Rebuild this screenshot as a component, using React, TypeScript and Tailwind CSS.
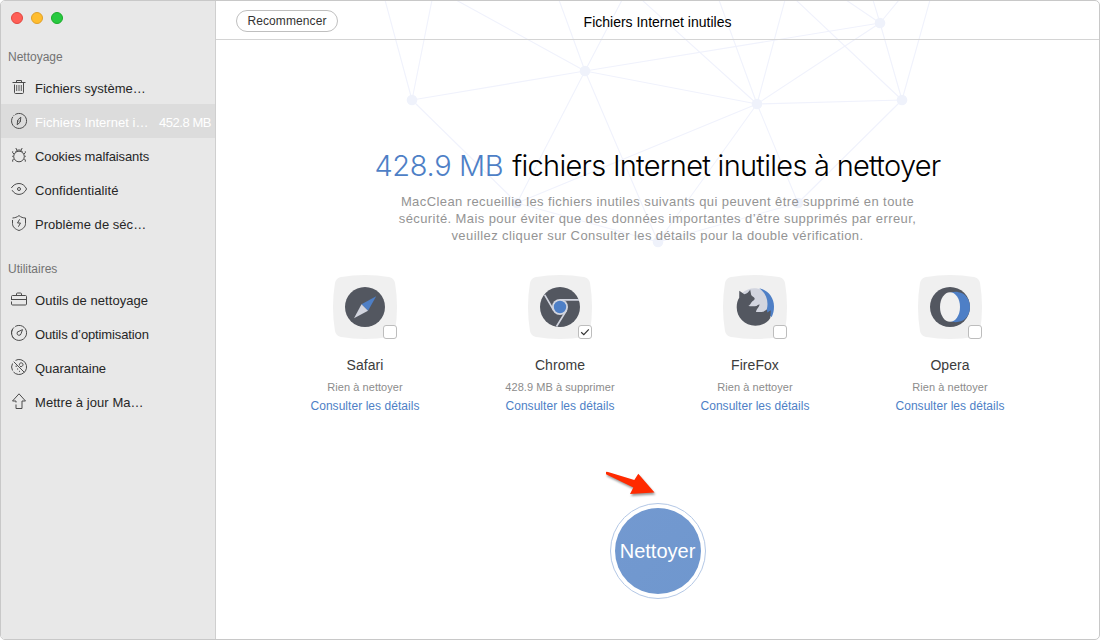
import type { ReactNode } from 'react';

const cleanup = [
  { label: 'Fichiers système…', icon: 'trash', track: 'tracking-[0.02px]' },
  { label: 'Fichiers Internet i…', icon: 'compass', track: 'tracking-[0.04px]', size: '452.8 MB', active: true },
  { label: 'Cookies malfaisants', icon: 'bug', track: 'tracking-[-0.12px]' },
  { label: 'Confidentialité', icon: 'eye', track: 'tracking-[0.07px]' },
  { label: 'Problème de séc…', icon: 'shield', track: 'tracking-[0.04px]' },
];

const utilities = [
  { label: 'Outils de nettoyage', icon: 'toolbox', track: 'tracking-[0.06px]' },
  { label: 'Outils d’optimisation', icon: 'gauge', track: 'tracking-[-0.12px]' },
  { label: 'Quarantaine', icon: 'quarantine', track: 'tracking-[-0.05px]' },
  { label: 'Mettre à jour Ma…', icon: 'arrow', track: 'tracking-[0.06px]' },
];

const browsers = [
  { name: 'Safari', status: 'Rien à nettoyer', checked: false },
  { name: 'Chrome', status: '428.9 MB à supprimer', checked: true },
  { name: 'FireFox', status: 'Rien à nettoyer', checked: false },
  { name: 'Opera', status: 'Rien à nettoyer', checked: false },
];

const nodes = [
  [412, 100], [585, 71], [757, 104], [880, 23], [902, 100], [517, 203], [798, 203], [658, 242],
];

const lines = [
  [412, 100, 385, 0], [412, 100, 432, 0], [412, 100, 585, 71], [412, 100, 517, 203],
  [585, 71, 456, 0], [585, 71, 559, 0], [585, 71, 622, 0], [585, 71, 880, 23],
  [585, 71, 757, 104], [585, 71, 517, 203], [585, 71, 658, 242],
  [757, 104, 642, 0], [757, 104, 719, 0], [757, 104, 785, 0], [757, 104, 880, 23],
  [757, 104, 902, 100], [757, 104, 517, 203], [757, 104, 658, 242], [757, 104, 798, 203],
  [902, 100, 796, 0], [902, 100, 880, 23], [902, 100, 930, 0], [902, 100, 798, 203],
  [880, 23, 846, 0], [880, 23, 873, 0], [880, 23, 899, 0],
  [517, 203, 658, 242], [798, 203, 658, 242],
];

const menuIcons: Record<string, ReactNode> = {
  trash: (
    <>
      <path d="M1.5 3.5h13M5.5 3.500V1.500h5v2M3.500 5.500v8c0 .6.400 1 1 1h7c.6 0 1-.4 1-1v-10" />
      <path d="M5.700 6v6M8 6v6M10.300 6v6" strokeWidth="0.9" />
    </>
  ),
  compass: (
    <>
      <path d="M4.200 1.500A7.500 7.500 0 1 1 1.800 3.800M2.400 3l.7-.7" />
      <path d="M9.800 4.200 9.300 9 6.200 11.800 6.700 7zM8 7.500v1.200" />
    </>
  ),
  bug: (
    <>
      <circle cx="8" cy="9.500" r="5.300" />
      <path d="M4.500 5.200C5.200 3.500 6.400 3 8 3s2.800.5 3.500 2.200M6 3.300 4.800 1M10 3.300 11.200 1" />
      <path d="M1.700 4.300v1.500l1.600 1.400M14.300 4.300v1.500l-1.600 1.400M2.900 11.700l-1.200 1.300v1.700M13.100 11.700l1.200 1.300v1.700M1.200 9.300h1.200M13.600 9.300h1.200" />
    </>
  ),
  eye: (
    <>
      <path d="M.3 7C2.400 3.900 5 2.500 8 2.500s5.800 1.800 7.600 5.500C13.600 11.700 11 13.400 8 13.400c-2.800 0-5.200-1.400-6.900-4.200" />
      <circle cx="8" cy="8" r="1.500" />
    </>
  ),
  shield: (
    <>
      <path d="M1.500 5v3.500c0 3.500 2.700 5.700 6.500 7 3.800-1.300 6.500-3.500 6.500-7V3C12 3 10 2.200 8 .6 6 2.200 4 2.800 1.500 3" />
      <path d="M8.600 4.300 6.500 8h3l-2.100 3.700" />
    </>
  ),
  toolbox: (
    <>
      <path d="M.5 9V5.500c0-.6.400-1 1-1h13c.6 0 1 .4 1 1V13c0 .6-.4 1-1 1h-13c-.6 0-1-.4-1-1v-2.500M.5 8.500h15" />
      <path d="M5.500 4.500V3c0-.6.300-1 1-1h3c.7 0 1 .4 1 1v1.500" />
    </>
  ),
  gauge: (
    <>
      <path d="M4.200 1.500A7.500 7.500 0 1 1 3 2.400M1.500 4.200A7.500 7.500 0 0 0 .6 9.500M1.200 11.300a7.500 7.500 0 0 0 2 2.500" />
      <path d="M11.500 4.600 8 6.300a2 2 0 1 0 2 2.500z" />
    </>
  ),
  quarantine: (
    <>
      <path d="M4.500 1.400a7.500 7.500 0 1 1-2 11.600M1.500 11.500a7.500 7.500 0 0 1 0-7" />
      <path d="M2.700 2.700 13.300 13.300M8.500 6.500c-.6-1.800.8-3 2.200-2.600 1.500.4 1.800 2.200.6 3.200-.8.6-1.600.6-2.300.4M4.500 7.200h1.600M6 10h1.200M8 12.300h1" />
    </>
  ),
  arrow: <path d="M5 9.500V8H1.500L8 .8 14.500 8H11v7.500H5v-4" />,
};

const browserIcons: Record<string, ReactNode> = {
  Safari: (
    <>
      <circle cx="32" cy="32" r="20" fill="#535760" />
      <path d="M43.200 21.200 28.500 29.300 35 35.700z" fill="#4e7fc6" />
      <path d="M21 43.200 28.500 29.300 35 35.700z" fill="#d2d5df" />
    </>
  ),
  Chrome: (
    <>
      <circle cx="32" cy="32" r="20" fill="#535760" />
      <path d="M32 24.800H51M25.700 35.400 16.700 19.800M38.300 35.600 28.500 51.500" stroke="#d2d5df" strokeWidth="1.700" />
      <circle cx="32" cy="32" r="8" fill="#d2d5df" />
      <circle cx="32" cy="32" r="6.200" fill="#4e7fc6" />
    </>
  ),
  FireFox: (
    <>
      <path d="M19 18C23 14.500 28 12.800 33 13.200C42 14 47 22 45.500 32L42 40H22z" fill="#d2d5df" />
      <path d="M36.300 13.200C45 15 51 22.500 51 31.500C51 35.500 50.300 38.800 48.700 42L42.500 38C46.500 29 44.500 19.500 36.300 13.200z" fill="#4e7fc6" />
      <path d="M16.300 15.800L21.300 19.300C23.500 19 25.300 17.300 27.200 14.700L28.200 20C29 21.400 31.300 21.800 31.700 23.600C31.700 25.500 29.600 26 28.500 27.300C27.700 28.700 27 30 25.300 31C28.500 31.500 31.500 31.300 33.500 31C34.500 30.500 35 29.800 36.500 29.300C36.500 32.500 33.500 33.300 33 37H38.700C41 37 41.800 35.300 44 34.500L44.300 37.500L47.800 35.200L47.300 43C44.300 48 38.500 50.700 32.300 50.700C21.700 50.700 13.700 42.500 13.700 32.300C13.700 28.500 14.500 25.500 16.200 22.800z" fill="#535760" />
    </>
  ),
  Opera: (
    <>
      <circle cx="32" cy="32" r="20" fill="#535760" />
      <path d="M32 18c3-1.200 6-1.400 8.500-.8C47.500 18 52 24.500 52 32s-4.500 14-11.500 14.800c-2.500.6-5.500.4-8.500-.8z" fill="#4e7fc6" />
      <ellipse cx="32" cy="32" rx="10" ry="14.700" fill="#f0f0f0" />
    </>
  ),
};

function MenuItem({ item }: { item: { label: string; icon: string; track: string; size?: string; active?: boolean } }) {
  return (
    <div className={`flex h-[34px] items-center pl-[10px] pr-1 text-[13px] ${item.active ? 'bg-[#dcdcdc] text-white' : 'text-[#262626]'}`}>
      <svg viewBox="0 0 16 16" className="h-4 w-4 shrink-0 overflow-visible" fill="none" stroke="#4b4b4b" strokeWidth="1">
        {menuIcons[item.icon]}
      </svg>
      <span className={`ml-2 pt-1 whitespace-nowrap ${item.track}`}>{item.label}</span>
      {item.size && <span className="ml-auto pt-1 tracking-[-0.45px] whitespace-nowrap">{item.size}</span>}
    </div>
  );
}

function Sidebar() {
  return (
    <aside className="w-[215px] shrink-0 border-r border-[#cfcfcf] bg-[#e8e8e8]">
      <div className="flex gap-2 pt-[11px] pl-[10px]">
        <span className="h-3 w-3 rounded-full border border-[#e2463f] bg-[#ff5f57]" />
        <span className="h-3 w-3 rounded-full border border-[#e0a028] bg-[#ffbd2e]" />
        <span className="h-3 w-3 rounded-full border border-[#1aab29] bg-[#28c940]" />
      </div>
      <h2 className="mt-6 h-[22px] pl-[7px] text-[12px] leading-[18px] text-[#737373]">Nettoyage</h2>
      <nav>
        {cleanup.map((item) => (
          <MenuItem key={item.label} item={item} />
        ))}
      </nav>
      <h2 className="mt-5 h-[22px] pl-[7px] text-[12px] leading-[18px] text-[#737373]">Utilitaires</h2>
      <nav>
        {utilities.map((item) => (
          <MenuItem key={item.label} item={item} />
        ))}
      </nav>
    </aside>
  );
}

function Browser({ name, status, checked }: { name: string; status: string; checked: boolean }) {
  return (
    <div className="flex flex-col items-center">
      <div className="relative">
        <svg viewBox="0 0 64 64" className="h-16 w-16">
          <path d="M8 2Q32-2 56 2Q61 3 62 8Q66 32 62 56Q61 61 56 62Q32 66 8 62Q3 61 2 56Q-2 32 2 8Q3 3 8 2z" fill="#f0f0f0" />
          {browserIcons[name]}
        </svg>
        <span className="absolute right-0 bottom-0 flex h-[14px] w-[14px] items-center justify-center rounded-[3px] border border-[#bdbdbd] bg-white">
          {checked && (
            <svg viewBox="0 0 10 10" className="h-[10px] w-[10px]" fill="none" stroke="#333" strokeWidth="1.200">
              <path d="M1.200 5.200 3.800 7.600 8.800 2.300" />
            </svg>
          )}
        </span>
      </div>
      <div className="mt-[17px] text-[14px] leading-[18px] tracking-[0.05px] text-[#3c3c3c]">{name}</div>
      <div className="mt-[6px] text-[11px] leading-[14px] tracking-[0.06px] text-[#8c8c8c]">{status}</div>
      <a className="mt-1 text-[12px] leading-4 tracking-[0.05px] text-[#4e7fc6]">Consulter les détails</a>
    </div>
  );
}

export default function App() {
  return (
    <div className="flex h-[640px] w-[1100px] overflow-hidden rounded-[5px] border border-[#c8c8c8] bg-white font-['Liberation_Sans',sans-serif]">
      <Sidebar />
      <main className="relative flex-1">
        <svg viewBox="216 1 883 260" className="absolute top-0 left-0 h-[260px] w-[883px]" aria-hidden="true">
          {lines.map(([x1, y1, x2, y2], i) => (
            <line key={i} x1={x1} y1={y1} x2={x2} y2={y2} stroke="#f0f2fc" strokeWidth="1.100" />
          ))}
          {nodes.map(([x, y], i) => (
            <circle key={i} cx={x} cy={y} r="5.300" fill="#eff2fb" />
          ))}
        </svg>

        <div className="relative flex h-full flex-col items-center">
          <header className="grid h-[39px] w-full grid-cols-[1fr_auto_1fr] items-center border-b border-[#d4d4d4]">
            <button className="mt-[2px] ml-5 h-[22px] w-[102px] rounded-full border border-[#bfbfbf] bg-white text-[12px] leading-5 tracking-[0.1px] text-[#333]">
              Recommencer
            </button>
            <h1 className="pt-1 text-[14px] text-black">Fichiers Internet inutiles</h1>
          </header>

          <p className="mt-[106px] flex gap-[9px] text-[29px] leading-10 font-light whitespace-nowrap text-black font-['Inter',sans-serif]">
            <span className="tracking-[-0.35px] text-[#4e7fc6]">428.9 MB</span>
            <span className="tracking-[-0.73px]">fichiers Internet inutiles à nettoyer</span>
          </p>
          <p className="mt-[7px] text-center text-[13px] leading-[17px] tracking-[0.41px] whitespace-nowrap text-[#949494]">
            MacClean recueillie les fichiers inutiles suivants qui peuvent être supprimé en toute
            <br />
            sécurité. Mais pour éviter que des données importantes d’être supprimés par erreur,
            <br />
            veuillez cliquer sur Consulter les détails pour la double vérification.
          </p>

          <div className="mt-[31px] grid w-[780px] grid-cols-4">
            {browsers.map((browser) => (
              <Browser key={browser.name} {...browser} />
            ))}
          </div>

          <div className="relative mt-[89px]">
            <svg viewBox="600 466 60 34" className="absolute -top-[37px] -left-[10px] h-[34px] w-[60px] overflow-visible drop-shadow-[1px_2px_1px_rgba(0,0,0,0.4)]" aria-hidden="true">
              <path d="M606 474.200V472Q606.500 471.500 608 472L634.300 480 638.300 473.700 654.500 492.500 630 494 633.300 487.500z" fill="#ff2a00" />
            </svg>
            <button className="flex h-24 w-24 items-center justify-center rounded-full border border-[#b4c8e6] bg-white">
              <span className="flex h-[86px] w-[86px] items-center justify-center rounded-full bg-linear-to-br from-[#7399d0] to-[#6f97ce] text-[20px] whitespace-nowrap text-white">
                Nettoyer
              </span>
            </button>
          </div>
        </div>
      </main>
    </div>
  );
}
